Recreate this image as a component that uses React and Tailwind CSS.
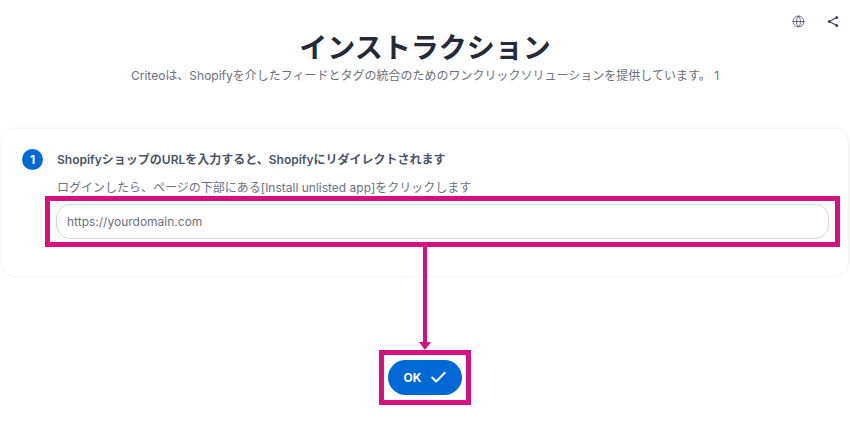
import { Check, Globe } from 'lucide-react'

const font = { fontFamily: 'Inter, "Noto Sans CJK JP", sans-serif' }

function App() {
  return (
    <div style={font} className="relative w-[850px] h-[422px] overflow-hidden bg-white">
      <div className="flex justify-end items-start gap-[22px] pt-[15px] pr-[11px] h-[30px] text-[#43506a]">
        <Globe size={13} strokeWidth={1.5} />
        <svg width="12" height="13" viewBox="0 0 12 13" fill="#3f4a60" stroke="#3f4a60" strokeWidth="1.2">
          <path d="M9.5 2.5 2.5 6.5l7 4" fill="none" />
          <circle cx="9.7" cy="2.4" r="1.5" stroke="none" />
          <circle cx="2.3" cy="6.5" r="1.5" stroke="none" />
          <circle cx="9.7" cy="10.6" r="1.5" stroke="none" />
        </svg>
      </div>

      <div className="flex flex-col items-center">
        <h1 className="text-[28px] leading-[36px] font-bold text-[#252b36]">インストラクション</h1>
        <p className="text-[12px] leading-[20px] text-[#6b7280]">
          Criteoは、Shopifyを介したフィードとタグの統合のためのワンクリックソリューションを提供しています。 1
        </p>
      </div>

      <div className="mt-[42px] mx-[1px] h-[149px] bg-white rounded-[14px] border border-[#f3f4f6] shadow-[0_-2px_6px_rgba(0,0,0,0.02)] pt-[20px] pl-[20px] pr-[18px]">
        <div className="flex items-center gap-[14px] h-[21px]">
          <span className="flex items-center justify-center w-[21px] h-[21px] rounded-full bg-[#0069d6] text-white text-[12px] font-bold">1</span>
          <span className="text-[12px] font-semibold text-[#4b5563]">ShopifyショップのURLを入力すると、Shopifyにリダイレクトされます</span>
        </div>
        <p className="ml-[35px] mt-[9px] text-[12px] leading-[18px] text-[#6b7280]">
          ログインしたら、ページの下部にある[Install unlisted app]をクリックします
        </p>
        <input
          readOnly
          placeholder="https://yourdomain.com"
          className="block ml-[34px] mt-[7px] w-[773px] h-[35px] px-[10px] rounded-[14px] border border-[#d5d7da] bg-white text-[12px] placeholder:text-[#6b7280] outline-none"
        />
      </div>

      <div className="flex justify-center mt-[83px]">
        <button type="button" className="flex items-center justify-center gap-[8px] w-[74px] h-[35px] pl-[2px] rounded-full bg-[#0069d6] text-white text-[12px] font-bold">
          OK
          <Check size={19} strokeWidth={2.5} />
        </button>
      </div>

      {/* annotation overlays */}
      <div className="absolute left-[45px] top-[196px] w-[795px] h-[51px] border-[5px] border-[#d6107f]" />
      <div className="absolute left-[423px] top-[247px] w-[4px] h-[97px] bg-[#d6107f]" />
      <div className="absolute left-[419px] top-[342px] w-0 h-0 border-x-[6px] border-x-transparent border-t-[8px] border-t-[#d6107f]" />
      <div className="absolute left-[379px] top-[350px] w-[92px] h-[55px] border-[5px] border-[#d6107f]" />
    </div>
  )
}

export default App
